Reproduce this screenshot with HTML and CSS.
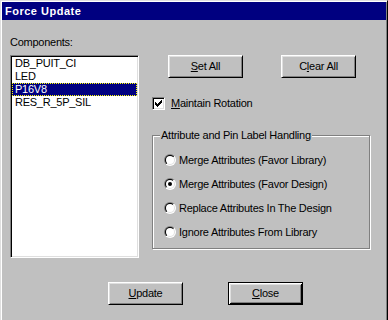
FILE: index.html
```html
<!DOCTYPE html>
<html lang="en">
<head>
    <meta charset="UTF-8">
    <meta name="viewport" content="width=device-width, initial-scale=1.0">
    <title>Force Update</title>
    <link rel="stylesheet" href="styles.css">
</head>
<body>
<div class="window">
    <div class="titlebar">Force Update</div>
    <div class="content">
        <div class="main">
            <div class="left">
                <div class="label">Components:</div>
                <div class="listbox">
                    <div class="item">DB_PUIT_CI</div>
                    <div class="item">LED</div>
                    <div class="item selected">P16V8</div>
                    <div class="item">RES_R_5P_SIL</div>
                </div>
            </div>
            <div class="right">
                <div class="btn-row">
                    <div class="button"><u>S</u>et All</div>
                    <div class="button">C<u>l</u>ear All</div>
                </div>
                <div class="check-row">
                    <span class="checkbox">
                        <svg width="7" height="7" viewBox="0 0 7 7"><path d="M6 0h1v1h-1zM5 1h2v1h-2zM0 2h1v1h-1zM4 2h3v1h-3zM0 3h2v1h-2zM3 3h3v1h-3zM0 4h5v1h-5zM1 5h3v1h-3zM2 6h1v1h-1z" fill="#000"/></svg>
                    </span>
                    <span><u>M</u>aintain Rotation</span>
                </div>
                <fieldset class="group">
                    <legend>Attribute and Pin Label Handling</legend>
                    <div class="radio-row"><span class="radio"><span class="radio-in"><span class="radio-fill"></span></span></span>Merge Attributes (Favor Library)</div>
                    <div class="radio-row"><span class="radio"><span class="radio-in"><span class="radio-fill"><span class="dot"></span></span></span></span>Merge Attributes (Favor Design)</div>
                    <div class="radio-row"><span class="radio"><span class="radio-in"><span class="radio-fill"></span></span></span>Replace Attributes In The Design</div>
                    <div class="radio-row"><span class="radio"><span class="radio-in"><span class="radio-fill"></span></span></span>Ignore Attributes From Library</div>
                </fieldset>
            </div>
        </div>
        <div class="footer">
            <div class="button"><u>U</u>pdate</div>
            <div class="button default"><u>C</u>lose</div>
        </div>
    </div>
</div>
</body>
</html>
```
FILE: styles.css
```css
*{
    margin:0;padding:0;box-sizing:border-box;
}
body{
    background-color:#c0c0c0;
    font-family:"Liberation Sans",Arial,sans-serif;
    font-size:11px;
    line-height:13px;
    letter-spacing:-0.25px;
    color:#000;
    overflow:hidden;
}
.window{
    width:388px;
    height:326px;
    background-color:#c0c0c0;
    border:1px solid;
    border-color:#dfdfdf #000 #000 #dfdfdf;
    box-shadow:inset 1px 1px 0 #fff, inset -1px -1px 0 #808080;
    padding:1px;
}
.titlebar{
    height:18px;
    background-color:#000080;
    color:#fff;
    font-weight:bold;
    letter-spacing:0.5px;
    padding:1px 0 0 3px;
    line-height:17px;
}
.content{
    padding:16px 0 0 8px;
}
.main{
    display:flex;
}
.left{
    width:129px;
}
.label{
    height:13px;
    margin-bottom:6px;
}
.listbox{
    height:203px;
    background-color:#fff;
    border:1px solid;
    border-color:#808080 #fff #fff #808080;
    box-shadow:inset 1px 1px 0 #000, inset -1px -1px 0 #dfdfdf;
    padding:1px;
}
.item{
    height:13px;
    padding-left:3px;
    white-space:nowrap;
}
.item.selected{
    background-color:#000080;
    color:#fff;
    border:1px dotted #ffff00;
    padding-left:2px;
    line-height:11px;
}
.right{
    margin-left:13px;
}
.btn-row{
    display:flex;
    gap:38px;
    margin:19px 0 0 16px;
}
.button{
    width:75px;
    height:23px;
    display:flex;
    align-items:center;
    justify-content:center;
    background-color:#c0c0c0;
    border:1px solid;
    border-color:#fff #000 #000 #fff;
    box-shadow:inset 1px 1px 0 #dfdfdf, inset -1px -1px 0 #808080;
}
.button.default{
    border-color:#000;
    box-shadow:inset 1px 1px 0 #fff, inset -1px -1px 0 #000, inset 2px 2px 0 #dfdfdf, inset -2px -2px 0 #808080;
}
.check-row{
    display:flex;
    align-items:center;
    gap:6px;
    height:13px;
    margin-top:19px;
}
.checkbox{
    width:13px;
    height:13px;
    background-color:#fff;
    border:1px solid;
    border-color:#808080 #fff #fff #808080;
    box-shadow:inset 1px 1px 0 #000, inset -1px -1px 0 #dfdfdf;
    padding:2px;
    display:flex;
}
.group{
    width:218px;
    height:120px;
    margin-top:19px;
    border:1px solid #808080;
    box-shadow:inset 1px 1px 0 #fff, 1px 1px 0 #fff;
    padding:10px 0 0 11px;
}
.group legend{
    padding:0 1px;
    margin-left:-4px;
    background-color:#c0c0c0;
    line-height:13px;
}
.radio-row{
    display:flex;
    align-items:center;
    gap:3px;
    height:16px;
    margin-bottom:8px;
    white-space:nowrap;
}
.radio{
    width:12px;
    height:12px;
    border-radius:50%;
    padding:1px;
    background:linear-gradient(135deg,#808080 50%,#fff 50%);
}
.radio-in{
    display:block;
    width:10px;
    height:10px;
    border-radius:50%;
    padding:1px;
    background:linear-gradient(135deg,#000 50%,#dfdfdf 50%);
}
.radio-fill{
    width:8px;
    height:8px;
    border-radius:50%;
    background-color:#fff;
    display:flex;
    align-items:center;
    justify-content:center;
}
.dot{
    width:4px;
    height:4px;
    border-radius:50%;
    background-color:#000;
}
.footer{
    display:flex;
    gap:45px;
    margin:24px 0 0 98px;
}
```
